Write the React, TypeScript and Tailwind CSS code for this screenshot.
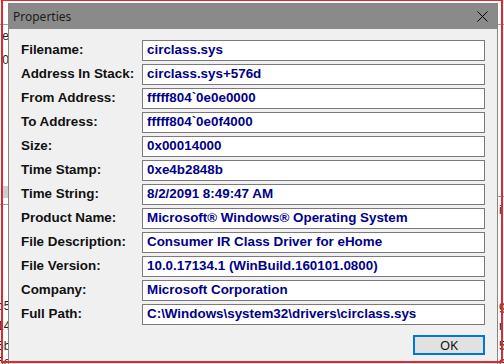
const rows: [string, string][] = [
  ["Filename:", "circlass.sys"],
  ["Address In Stack:", "circlass.sys+576d"],
  ["From Address:", "fffff804`0e0e0000"],
  ["To Address:", "fffff804`0e0f4000"],
  ["Size:", "0x00014000"],
  ["Time Stamp:", "0xe4b2848b"],
  ["Time String:", "8/2/2091 8:49:47 AM"],
  ["Product Name:", "Microsoft® Windows® Operating System"],
  ["File Description:", "Consumer IR Class Driver for eHome"],
  ["File Version:", "10.0.17134.1 (WinBuild.160101.0800)"],
  ["Company:", "Microsoft Corporation"],
  ["Full Path:", "C:\\Windows\\system32\\drivers\\circlass.sys"],
];

// bits of the window lying behind the dialog
const leftBits: [number, string][] = [
  [30, "e"],
  [54, "0"],
  [300, "b5"],
  [320, "14"],
  [340, "5b"],
  [356, "5e"],
];
const rightBits: [number, string][] = [
  [204, "i"],
  [300, "g"],
  [320, "r"],
  [340, "5"],
  [356, "e"],
];

export default function App() {
  return (
    <div className="relative w-[504px] h-[364px] overflow-hidden bg-white font-['Liberation_Sans',Arial,sans-serif]">
      {/* background window */}
      <div className="absolute left-0 top-[24px] w-full border-t border-[#a0a0a0]" />
      <div className="absolute left-[2px] top-[186px] w-[6px] h-[12px] bg-[#d0d0d0]" />
      <div className="absolute left-0 top-[204px] w-[8px] border-t border-[#a0a0a0]" />
      {leftBits.map(([y, t]) => (
        <div
          key={y}
          className="absolute left-[-3px] text-[12px] leading-none text-[#222] w-[12px] text-right"
          style={{ top: y }}
        >
          {t}
        </div>
      ))}
      {rightBits.map(([y, t]) => (
        <div
          key={y}
          className="absolute left-[499px] text-[12px] leading-none text-[#222]"
          style={{ top: y }}
        >
          {t}
        </div>
      ))}
      <div className="absolute left-[498px] top-[196px] w-[6px] border-t border-[#a0a0a0]" />

      {/* dialog */}
      <div className="absolute left-[8px] top-[3px] w-[490px] h-[370px] flex flex-col bg-[#f0f0f0] border border-[#858585]">
        <div className="h-[25px] shrink-0 bg-[#8a8a8a] flex items-center justify-between pl-[4px] pr-[9px] font-['Noto_Sans',sans-serif] text-[12px] text-[#1b1b1b]">
          <span>Properties</span>
          <svg width="11" height="11" viewBox="0 0 11 11" className="text-black">
            <path d="M0.5 0.5 L10.5 10.5 M10.5 0.5 L0.5 10.5" stroke="currentColor" strokeWidth="1" fill="none" />
          </svg>
        </div>
        <div className="flex flex-col pt-[11px] pl-[12px] pr-[12px]">
          <div className="flex flex-col gap-[3px]">
            {rows.map(([label, value]) => (
              <div key={label} className="flex items-center h-[21px]">
                <div className="w-[121px] shrink-0 font-bold text-[13.4px] text-[#111]">{label}</div>
                <div className="flex-1 h-[21px] flex items-center bg-white border border-[#7a7a7a] pl-[4px] font-bold text-[13.4px] text-[#00008b] whitespace-nowrap overflow-hidden">
                  {value}
                </div>
              </div>
            ))}
          </div>
          <div className="flex justify-end mt-[10px]">
            <button
              type="button"
              className="w-[72px] h-[20px] bg-[#e1e1e1] border-2 border-[#0078d7] text-[13px] leading-none text-[#111] font-['Noto_Sans',sans-serif]"
            >
              OK
            </button>
          </div>
        </div>
      </div>

      {/* red capture frame */}
      <div className="absolute left-[1px] top-0 w-[502px] h-[363px] border-2 border-t border-[#e0282e] pointer-events-none" />
    </div>
  );
}
